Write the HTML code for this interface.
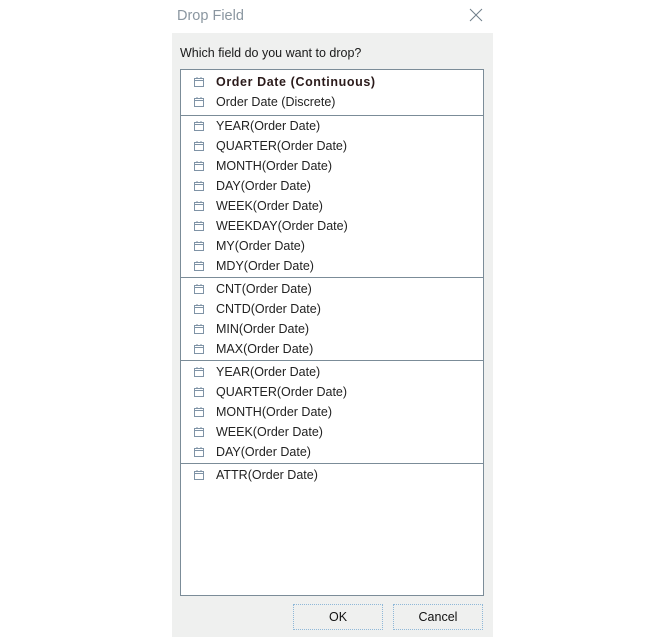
<!DOCTYPE html>
<html><head><style>
body{margin:0;width:664px;height:637px;background:#fff;position:relative;overflow:hidden;font-family:"Liberation Sans",sans-serif;}
.title{position:absolute;left:177px;top:8px;font-size:14.5px;color:#8a96a0;}
.x{position:absolute;left:469px;top:8px;}
.body{position:absolute;left:172px;top:33px;width:321px;height:604px;background:#eff0ef;}
.q{position:absolute;left:180px;top:46px;font-size:12.5px;color:#1a1a1a;}
.list{position:absolute;left:180px;top:69px;width:302px;height:525px;background:#fff;border:1px solid #7b8c98;}
.row{position:absolute;left:0;height:20px;line-height:20px;font-size:12.5px;color:#222;}
.row svg{position:absolute;left:13px;top:5px;}
.row span{position:absolute;left:35px;white-space:nowrap;}
.sep{position:absolute;left:0;width:302px;height:1px;background:#7b8c98;}
.btn{position:absolute;top:604px;width:88px;height:24px;border:1px dotted #8fb8d8;background:#eff0ef;font-size:12.5px;text-align:center;line-height:24px;color:#111;}
</style></head><body>
<div class="title">Drop Field</div>
<svg class="x" width="14" height="14"><path d="M1 1L13 13M13 1L1 13" stroke="#6f7e8a" stroke-width="1"/></svg>
<div class="body"></div>
<div class="q">Which field do you want to drop?</div>
<div class="list">
<div id="rows"></div>
</div>
<div class="btn" style="left:293px">OK</div>
<div class="btn" style="left:393px">Cancel</div>
<script>
var items=[["Order Date (Continuous)",2,1],["Order Date (Discrete)",22],null,["YEAR(Order Date)",46],["QUARTER(Order Date)",66],["MONTH(Order Date)",86],["DAY(Order Date)",106],["WEEK(Order Date)",126],["WEEKDAY(Order Date)",146],["MY(Order Date)",166],["MDY(Order Date)",186],null,["CNT(Order Date)",209],["CNTD(Order Date)",229],["MIN(Order Date)",249],["MAX(Order Date)",269],null,["YEAR(Order Date)",292],["QUARTER(Order Date)",312],["MONTH(Order Date)",332],["WEEK(Order Date)",352],["DAY(Order Date)",372],null,["ATTR(Order Date)",395]];
var seps=[45,207,290,393];
var h="";
var icon='<svg width="10" height="10"><rect x="0.5" y="1.5" width="9" height="8" fill="none" stroke="#7f93a6"/><path d="M0.5 3.5H9.5M3 0V2M7 0V2" stroke="#7f93a6"/></svg>';
items.forEach(function(it){if(!it)return;h+='<div class="row" style="top:'+(it[1])+'px">'+icon+'<span style="'+(it[2]?'font-weight:bold;color:#2a1a1a;letter-spacing:0.6px':'')+'">'+it[0]+'</span></div>';});
seps.forEach(function(s){h+='<div class="sep" style="top:'+s+'px"></div>';});
document.getElementById("rows").innerHTML=h;
</script>
</body></html>
